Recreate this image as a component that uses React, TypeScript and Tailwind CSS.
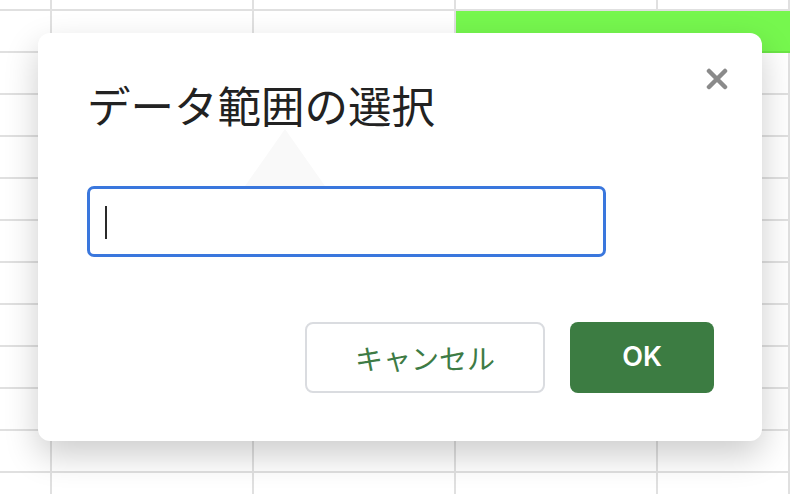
import React from "react";

const cols = [0, 1, 2, 3, 4];
const rows = Array.from({ length: 13 }, (_, i) => i);

export default function App() {
  return (
    <div className="relative w-[790px] h-[494px] overflow-hidden bg-white">
      <div className="grid grid-cols-[52px_202px_202px_202px_1fr] grid-rows-[11px_repeat(12,42px)]">
        {rows.map((r) =>
          cols.map((c) => {
            const green = r === 1 && c >= 3;
            return (
              <div
                key={`${r}-${c}`}
                className={
                  green
                    ? "bg-[#76f74e] border-b-2 border-[#6be545]"
                    : "border-r-2 border-b-2 border-[#e0e0e0]"
                }
              />
            );
          })
        )}
      </div>

      <div
        className="absolute left-[38px] top-[33px] w-[724px] h-[408px] rounded-[12px] bg-white shadow-[0_14px_34px_rgba(0,0,0,0.2)] flex flex-col pl-[49px] pr-[48px]"
        style={{ fontFamily: '"Noto Sans CJK JP", "Noto Sans", sans-serif' }}
      >
        <svg
          className="absolute left-[207px] top-[96px]"
          width="80"
          height="57"
          viewBox="0 0 80 57"
        >
          <polygon points="40,0 0,57 80,57" fill="#f9f9f9" />
        </svg>

        <button className="absolute right-[34px] top-[35px] w-[22px] h-[22px]">
          <svg width="22" height="22" viewBox="0 0 22 22" className="blur-[0.5px]">
            <path d="M3 3 L19 19 M19 3 L3 19" stroke="#8a8a8a" strokeWidth="4.5" strokeLinecap="round" />
          </svg>
        </button>

        <h1 className="relative mt-[42px] text-[43.5px] leading-[60px] font-normal text-[#222222]">
          データ範囲の選択
        </h1>

        <div className="relative mt-[51px] w-[519px] h-[71px] rounded-[7px] border-[3px] border-[#3a77dd] bg-white">
          <div className="absolute left-[15px] top-[17px] w-[2px] h-[33px] bg-[#2a2a2a]" />
        </div>

        <div className="mt-[65px] flex justify-end gap-[25px]">
          <button className="w-[240px] h-[71px] rounded-[8px] border-2 border-[#dadce0] bg-white text-[28px] text-[#3d7b45] flex items-center justify-center">
            キャンセル
          </button>
          <button
            className="w-[144px] h-[71px] rounded-[8px] bg-[#3c7c42] text-white text-[27px] font-semibold flex items-center justify-center"
            style={{ fontFamily: 'Inter, "Noto Sans", sans-serif' }}
          >
            OK
          </button>
        </div>
      </div>
    </div>
  );
}
